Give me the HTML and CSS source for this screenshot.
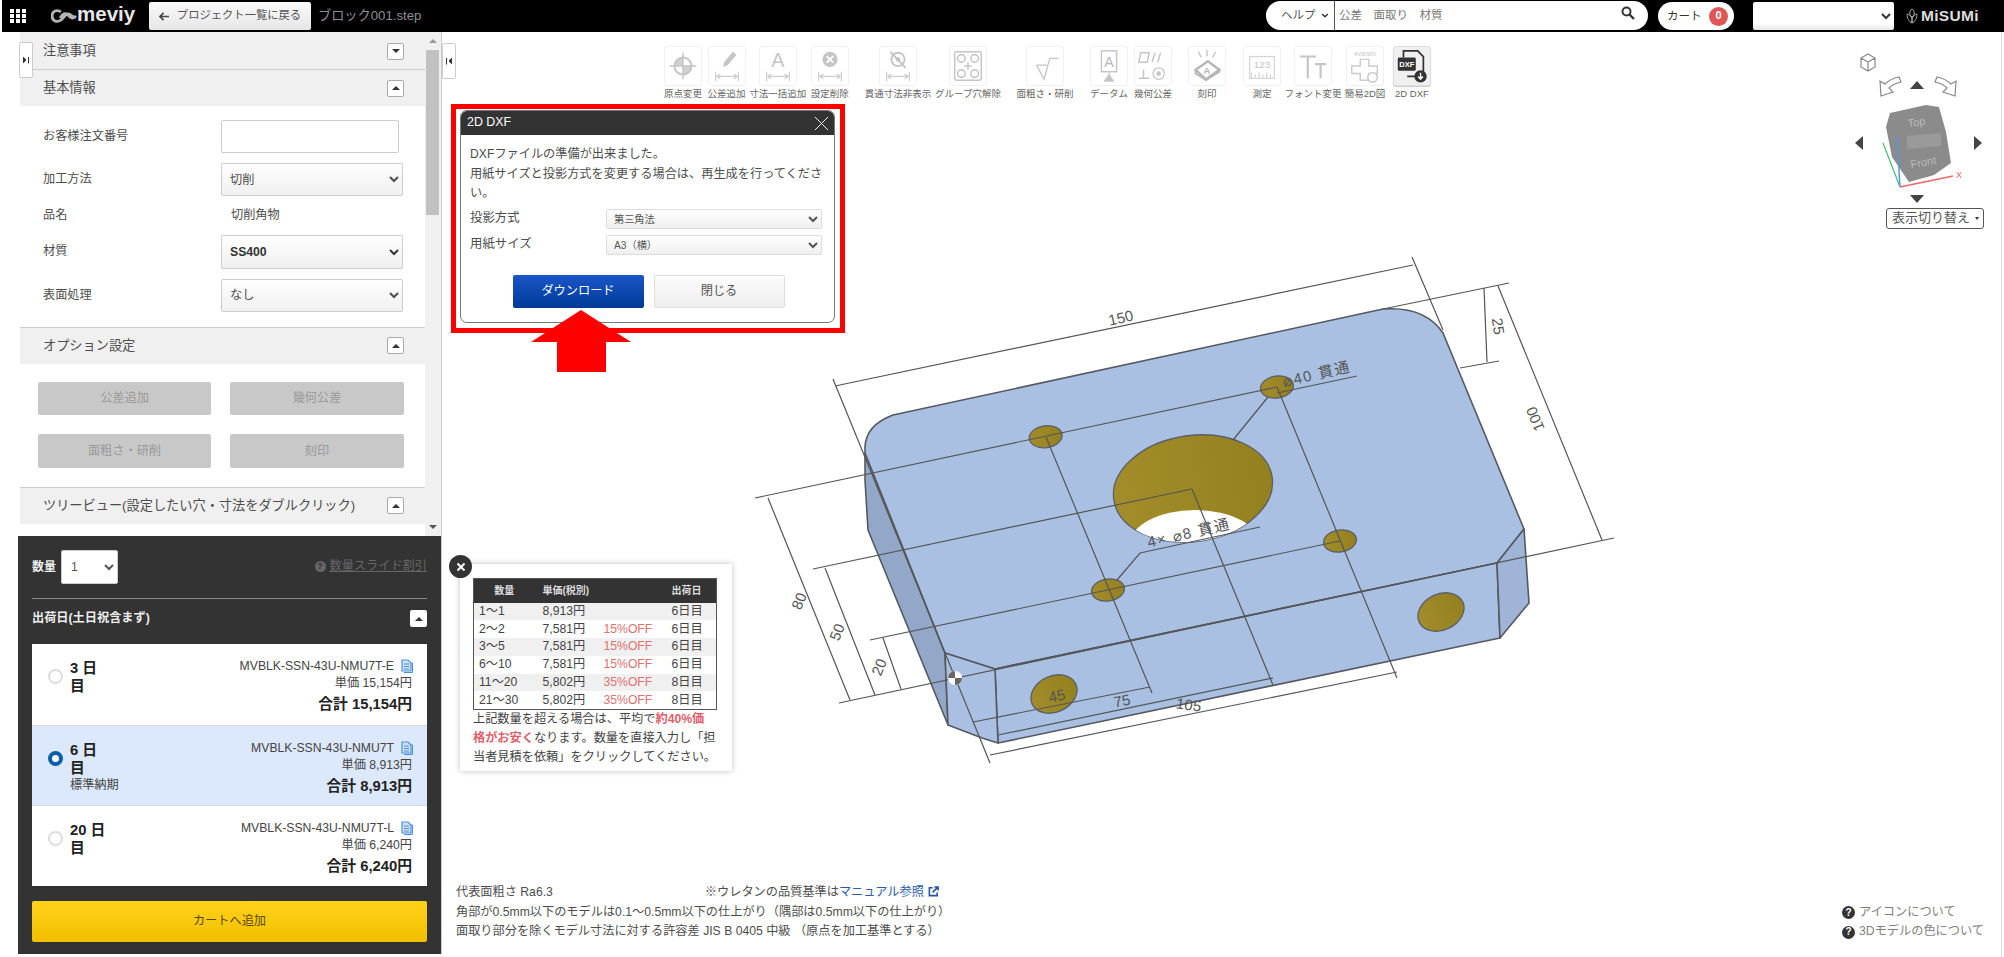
FILE: index.html
```html
<!DOCTYPE html>
<html lang="ja">
<head>
<meta charset="utf-8">
<title>meviy</title>
<link rel="stylesheet" href="styles.css">
</head>
<body>
<svg class="defs" width="0" height="0" aria-hidden="true">
  <defs>
    <symbol id="dim" viewBox="0 0 38 40">
      <path d="M7 26v10M31 26v10M8 31h22M8 31l4-2.5M8 31l4 2.5M30 31l-4-2.5M30 31l-4 2.5" fill="none" stroke="#c4c4c4" stroke-width="1.2"/>
    </symbol>
    <symbol id="copy" viewBox="0 0 12 14">
      <path d="M1 1h6l3 3v8H1z" fill="#cfe0f5" stroke="#4a90d9" stroke-width="1.2"/>
      <path d="M3 5h5M3 7.5h5M3 10h5" stroke="#4a90d9"/>
      <path d="M10 4h1.500v9.500H3" fill="none" stroke="#4a90d9"/>
    </symbol>
  </defs>
</svg>

<header class="topbar">
  <svg class="grid-icon" viewBox="0 0 16 14"><path d="M0 0h4v4H0zM6 0h4v4H6zM12 0h4v4h-4zM0 5h4v4H0zM6 5h4v4H6zM12 5h4v4h-4zM0 10h4v4H0zM6 10h4v4H6zM12 10h4v4h-4z" fill="#fff"/></svg>
  <div class="logo">
    <svg viewBox="0 0 26 14"><path d="M10 3C6 0 1 2 1 7s5 7 9 4c3-2 4-6 7-6s4 3 7 3M9 9c3-4 5-6 8-3 3 4 5 4 8 1" fill="none" stroke="#b4b4b4" stroke-width="2.800"/></svg>
    <span>meviy</span>
  </div>
  <button class="back-btn"><svg viewBox="0 0 12 10"><path d="M5 1L1 5l4 4M1 5h10" fill="none" stroke="#444" stroke-width="1.800"/></svg>プロジェクト一覧に戻る</button>
  <span class="filename">ブロック001.step</span>
  <div class="search">
    <span class="help">ヘルプ<svg viewBox="0 0 10 6"><path d="M1.500 1L5 4.500 8.500 1" fill="none" stroke="#333" stroke-width="1.800"/></svg></span>
    <input class="search-input" type="text" placeholder="公差　面取り　材質">
    <svg class="search-icon" viewBox="0 0 14 14"><circle cx="5.500" cy="5.500" r="4" fill="none" stroke="#333" stroke-width="2"/><path d="M8.500 8.500l4.500 4.500" stroke="#333" stroke-width="2.400"/></svg>
  </div>
  <div class="cart">カート<span class="cart-badge">0</span></div>
  <select class="top-select"><option></option></select>
  <div class="misumi">
    <svg viewBox="0 0 12 16"><path d="M6 1c3 2 3 6 0 8C3 7 3 3 6 1zM1 6c2 0 4 2 5 5v4C3 14 1 10 1 6zM11 6c-2 0-4 2-5 5v4c3-1 5-5 5-9z" fill="none" stroke="#aaa"/></svg>
    <span>MiSUMi</span>
  </div>
</header>

<div class="workspace">
  <aside class="sidebar">
    <button class="edge-tab edge-tab-left"><span class="bar-r"></span></button>
    <div class="settings">
      <div class="settings-scroll">
        <div class="acc-head first"><span>注意事項</span><button class="toggle"><i class="tri-down"></i></button></div>
        <div class="acc-head"><span>基本情報</span><button class="toggle"><i class="tri-up"></i></button></div>
        <div class="form-body">
          <label class="form-label">お客様注文番号</label><input class="form-input" type="text">
          <label class="form-label">加工方法</label><select class="form-select"><option>切削</option></select>
          <label class="form-label">品名</label><span class="form-text">切削角物</span>
          <label class="form-label">材質</label><select class="form-select form-select-strong"><option>SS400</option></select>
          <label class="form-label">表面処理</label><select class="form-select"><option>なし</option></select>
        </div>
        <div class="acc-head"><span>オプション設定</span><button class="toggle"><i class="tri-up"></i></button></div>
        <div class="option-body">
          <button class="opt-btn">公差追加</button><button class="opt-btn">幾何公差</button>
          <button class="opt-btn">面粗さ・研削</button><button class="opt-btn">刻印</button>
        </div>
        <div class="acc-head"><span>ツリービュー(設定したい穴・寸法をダブルクリック)</span><button class="toggle"><i class="tri-up"></i></button></div>
      </div>
      <div class="scrollbar">
        <i class="sb-up"></i><div class="sb-thumb"></div><i class="sb-down"></i>
      </div>
    </div>

    <section class="order">
      <div class="qty-row">
        <span class="qty-label">数量</span>
        <select class="qty-select"><option>1</option></select>
        <a class="qty-link"><i class="q-mark q-gray">?</i><u>数量スライド割引</u></a>
      </div>
      <div class="ship-head"><span>出荷日(土日祝含まず)</span><button class="toggle toggle-plain"><i class="tri-up"></i></button></div>
      <div class="ship-list">
        <label class="ship-row">
          <input class="radio" type="radio" name="ship">
          <span class="ship-date"><b>3 日目</b></span>
          <span class="ship-price">
            <span class="part">MVBLK-SSN-43U-NMU7T-E<svg class="copy"><use href="#copy"/></svg></span>
            <span class="unit">単価 15,154円</span>
            <strong class="total">合計 15,154円</strong>
          </span>
        </label>
        <label class="ship-row selected">
          <input class="radio" type="radio" name="ship" checked>
          <span class="ship-date"><b>6 日目</b><small>標準納期</small></span>
          <span class="ship-price">
            <span class="part">MVBLK-SSN-43U-NMU7T<svg class="copy"><use href="#copy"/></svg></span>
            <span class="unit">単価 8,913円</span>
            <strong class="total">合計 8,913円</strong>
          </span>
        </label>
        <label class="ship-row">
          <input class="radio" type="radio" name="ship">
          <span class="ship-date"><b>20 日目</b></span>
          <span class="ship-price">
            <span class="part">MVBLK-SSN-43U-NMU7T-L<svg class="copy"><use href="#copy"/></svg></span>
            <span class="unit">単価 6,240円</span>
            <strong class="total">合計 6,240円</strong>
          </span>
        </label>
      </div>
      <button class="cart-btn">カートへ追加</button>
    </section>
  </aside>

  <main class="viewer">
    <!-- 3D model canvas: coordinates are those of the page -->
    <svg class="model" viewBox="442 32 1562 925">
      <defs>
        <clipPath id="bigHole"><ellipse cx="1193" cy="488.500" rx="80" ry="53" transform="rotate(-8 1193 488.500)"/></clipPath>
        <linearGradient id="gold" x1="0" x2="1" y1="0" y2="0"><stop offset="0" stop-color="#a38d2a"/><stop offset="1" stop-color="#93801f"/></linearGradient>
      </defs>
      <g stroke="#55595f" stroke-width="1.600" stroke-linejoin="round">
        <path d="M865 453L945 653 948 725 868 530 865 480Z" fill="#93a8c9"/>
        <path d="M865 453V447Q866 425 893 415L1383 309Q1425 306 1443 333L1524 529 1497 563 995 669 945 653Z" fill="#a9c0e2"/>
        <path d="M995 669L1497 563 1500 638 998 743Z" fill="#a9c0e2"/>
        <path d="M1497 563L1524 529 1529 603 1500 638Z" fill="#9fb4d6"/>
        <path d="M945 653L995 669 998 743 982 738 948 725Z" fill="#a9c0e2"/>
      </g>
      <g stroke="#5a5f68" stroke-width="1.300" fill="url(#gold)">
        <ellipse cx="1193" cy="488.500" rx="80" ry="53" transform="rotate(-8 1193 488.500)"/>
        <ellipse cx="1045.700" cy="436.700" rx="16.500" ry="11" transform="rotate(-8 1045.700 436.700)"/>
        <ellipse cx="1108" cy="590" rx="16.500" ry="11" transform="rotate(-8 1108 590)"/>
        <ellipse cx="1277" cy="387" rx="16.500" ry="11" transform="rotate(-8 1277 387)"/>
        <ellipse cx="1340" cy="541" rx="16.500" ry="11" transform="rotate(-8 1340 541)"/>
        <ellipse cx="1054" cy="694" rx="24" ry="18" transform="rotate(-25 1054 694)"/>
        <ellipse cx="1441" cy="612" rx="24" ry="18" transform="rotate(-25 1441 612)"/>
      </g>
      <ellipse class="hole-through" cx="1195" cy="546" rx="66" ry="36" clip-path="url(#bigHole)"/>
      <g fill="none" stroke="#555" stroke-width="1.200">
        <path d="M755 498L1277 387M813 569L1192 489M870 640L1340 541M839 703L1614 538"/>
        <path d="M1046 437L1152 693M1192 489L1273 685M1277 387L1397 678"/>
        <path d="M835 386L1413 265M1412 257L1443 330M833 379L990 763M1383 309L1509 283"/>
        <path d="M1498 286L1602 540M1484 288L1487 362M1460 368L1499 361"/>
        <path d="M768 498L850 700M825 568L875 695M883 638L901 689"/>
        <path d="M973 722L1150 687M998 735L1273 678M990 755L1397 672"/>
        <path d="M1117 580L1140 553 1260 527M1233 440L1268 397M1277 393L1357 376"/>
      </g>
      <g class="dim-text">
        <text transform="translate(1122 323) rotate(-13)">150</text>
        <text transform="translate(1540 417) rotate(-112)">100</text>
        <text transform="translate(1493 327) rotate(82)">25</text>
        <text transform="translate(804 603) rotate(-68)">80</text>
        <text transform="translate(842 634) rotate(-68)">50</text>
        <text transform="translate(884 669) rotate(-68)">20</text>
        <text transform="translate(1058 701) rotate(-12)">45</text>
        <text transform="translate(1123 706) rotate(-11)">75</text>
        <text transform="translate(1188 710) rotate(8)">105</text>
        <text class="dim-wide" transform="translate(1190 538) rotate(-13)">4× ⌀8 貫通</text>
        <text class="dim-wide" transform="translate(1318 379) rotate(-13)">⌀40 貫通</text>
      </g>
      <g class="origin">
        <circle cx="955" cy="678" r="7" fill="#fff"/>
        <path d="M955 678V671A7 7 0 0 0 948 678ZM955 678V685A7 7 0 0 0 962 678Z" fill="#666"/>
      </g>

      <!-- view navigator -->
      <g fill="none" stroke="#888" stroke-width="1.200">
        <path d="M1868 54l7 4v9l-7 4-7-4v-9zM1861 58l7 4 7-4M1868 62v9"/>
        <path d="M1881 96l-1-15 5 3c4-4 9-6 14-7l2 5c-5 1-9 3-12 6l4 4z"/>
        <path d="M1955 96l1-15-5 3c-4-4-9-6-14-7l-2 5c5 1 9 3 12 6l-4 4z"/>
      </g>
      <g fill="#444">
        <path d="M1917 81l7 8h-14zM1917 203l-7-8h14zM1863 136v14l-8-7zM1974 136v14l8-7z"/>
      </g>
      <path d="M1926 105L1939 107 1946 132 1951 163 1934 175 1909 182 1892 157 1886 127 1890 113Z" fill="#8b8b8b"/>
      <path d="M1907 136L1941 133 1941 146 1907 149Z" fill="#9a9a9a"/>
      <text class="cube-text" transform="translate(1917 126) rotate(-8)">Top</text>
      <text class="cube-text" transform="translate(1924 166) rotate(-10)">Front</text>
      <path d="M1900 187L1953 176" stroke="#e66" stroke-width="1.500"/>
      <path d="M1900 187L1883 143" stroke="#4b7" stroke-width="1.200"/>
      <path d="M1900 187L1897 137" stroke="#59d" stroke-width="1.500"/>
      <text class="axis-x" x="1956" y="178">X</text>
    </svg>

    <div class="toolbar">
      <div class="tool"><div class="tool-box"><svg viewBox="0 0 38 40"><circle cx="19" cy="20" r="9" fill="#c9c9c9"/><path d="M19 20V11A9 9 0 0 1 28 20ZM19 20V29A9 9 0 0 1 10 20Z" fill="#fff"/><circle cx="19" cy="20" r="9" fill="none" stroke="#bbb" stroke-width="2"/><path d="M19 6v28M5 20h28" stroke="#bbb" stroke-width="1.500"/></svg></div><span>原点変更</span></div>
      <div class="tool"><div class="tool-box"><svg viewBox="0 0 38 40"><use href="#dim"/><path d="M15 21l1-5 9-11 4 3-9 11z" fill="#bbb"/></svg></div><span>公差追加</span></div>
      <div class="tool"><div class="tool-box"><svg viewBox="0 0 38 40"><use href="#dim"/><text class="tool-a" x="19" y="21">A</text></svg></div><span>寸法一括追加</span></div>
      <div class="tool"><div class="tool-box"><svg viewBox="0 0 38 40"><use href="#dim"/><circle cx="19" cy="13" r="8" fill="#bbb"/><path d="M15.500 9.500l7 7M22.500 9.500l-7 7" stroke="#fff" stroke-width="2"/></svg></div><span>設定削除</span></div>
      <div class="tool"><div class="tool-box"><svg viewBox="0 0 38 40"><use href="#dim"/><circle cx="19" cy="13" r="7" fill="none" stroke="#bbb" stroke-width="2"/><circle cx="19" cy="13" r="2.500" fill="#bbb"/><path d="M11 5l16 17" stroke="#bbb" stroke-width="2"/></svg></div><span>貫通寸法非表示</span></div>
      <div class="tool"><div class="tool-box"><svg viewBox="0 0 38 40"><rect x="5" y="5" width="28" height="30" rx="2" fill="none" stroke="#bbb" stroke-width="1.500"/><g fill="none" stroke="#aaa" stroke-width="1.300"><circle cx="12" cy="12" r="4"/><circle cx="26" cy="12" r="4"/><circle cx="12" cy="28" r="4"/><circle cx="26" cy="28" r="4"/></g><path d="M19 16v8M15 20h8" stroke="#bbb" stroke-width="1.500"/></svg></div><span>グループ穴解除</span></div>
      <div class="tool"><div class="tool-box"><svg viewBox="0 0 38 40"><path d="M10 19l8 15 6-22h9M10 19h11" fill="none" stroke="#bbb" stroke-width="1.400"/></svg></div><span>面粗さ・研削</span></div>
      <div class="tool"><div class="tool-box"><svg viewBox="0 0 38 40"><rect x="11" y="4" width="16" height="22" fill="none" stroke="#bbb" stroke-width="1.500"/><text class="tool-a tool-a-sm" x="19" y="21">A</text><path d="M19 26v5M14 36l5-7 5 7z" fill="#bbb" stroke="#bbb"/></svg></div><span>データム</span></div>
      <div class="tool"><div class="tool-box"><svg viewBox="0 0 38 40"><path d="M6 6h9l-2 10H4zM21 6l-3 10M27 6l-3 10M9 24v9M4 33h11" fill="none" stroke="#bbb" stroke-width="1.500"/><circle cx="25" cy="28" r="6" fill="none" stroke="#bbb" stroke-width="1.300"/><circle cx="25" cy="28" r="2.500" fill="#bbb"/></svg></div><span>幾何公差</span></div>
      <div class="tool"><div class="tool-box"><svg viewBox="0 0 38 40"><path d="M19 3v7M10 5l3 6M28 5l-3 6" stroke="#bbb" stroke-width="1.500"/><path d="M7 24l13-9 12 9-14 10z" fill="#fff" stroke="#aaa" stroke-width="2.500"/><path d="M7 24v4l11 7 14-9v-3" fill="none" stroke="#aaa" stroke-width="2"/><text class="tool-a tool-a-xs" x="19" y="28">A</text></svg></div><span>刻印</span></div>
      <div class="tool"><div class="tool-box"><svg viewBox="0 0 38 40"><rect x="6" y="10" width="26" height="23" fill="none" stroke="#ccc" stroke-width="1.300"/><text class="tool-num" x="19" y="22">123</text><path d="M8 32v-5M12 32v-3M16 32v-5M20 32v-3M24 32v-5M28 32v-3" stroke="#bbb"/></svg></div><span>測定</span></div>
      <div class="tool"><div class="tool-box"><svg viewBox="0 0 38 40"><path d="M5 10h17M13.500 10v23M21 18h12M27 18v15" fill="none" stroke="#bbb" stroke-width="2.300"/></svg></div><span>フォント変更</span></div>
      <div class="tool"><div class="tool-box"><svg viewBox="0 0 38 40"><text class="tool-views" x="19" y="9">6VIEWS</text><path d="M14 13h9v7h9v8H23v7h-9v-7H5v-8h9z" fill="none" stroke="#c4c4c4" stroke-width="1.500"/><circle cx="27" cy="32" r="5" fill="#fff" stroke="#bbb" stroke-width="1.500"/></svg></div><span>簡易2D図</span></div>
      <div class="tool tool-active"><div class="tool-box"><svg viewBox="0 0 38 40"><path d="M10 11V4h15l6 6v21H14" fill="none" stroke="#333" stroke-width="1.800"/><rect x="4" y="11" width="19" height="14" rx="1.500" fill="#333"/><text class="tool-dxf" x="13.500" y="21.500">DXF</text><circle cx="28" cy="31" r="6.500" fill="#333"/><path d="M28 27v6M25.500 31l2.500 3 2.500-3" fill="none" stroke="#fff" stroke-width="1.500"/></svg></div><span>2D DXF</span></div>
    </div>

    <div class="footnotes">
      <div class="notes">
        <p>代表面粗さ Ra6.3<span class="note-ref">※ウレタンの品質基準は<a class="manual">マニュアル参照</a><svg class="ext" viewBox="0 0 12 12"><path d="M10 7v3.500H1.500V2H5M7 1h4v4M11 1L5 7" fill="none" stroke="#2350a0" stroke-width="1.700"/></svg></span></p>
        <p>角部が0.5mm以下のモデルは0.1～0.5mm以下の仕上がり（隅部は0.5mm以下の仕上がり）</p>
        <p>面取り部分を除くモデル寸法に対する許容差 JIS B 0405 中級 （原点を加工基準とする）</p>
      </div>
      <div class="notes-help">
        <p><i class="q-mark">?</i>アイコンについて</p>
        <p><i class="q-mark">?</i>3Dモデルの色について</p>
      </div>
    </div>

    <button class="edge-tab edge-tab-right"><span class="bar-l"></span></button>
    <button class="view-switch">表示切り替え<i class="tri-down tri-small"></i></button>

    <!-- annotation frame with the dialog -->
    <div class="callout">
      <div class="dialog">
        <div class="dialog-title"><span>2D DXF</span><svg viewBox="0 0 16 16"><path d="M1 1l14 14M15 1L1 15" stroke="#fff" stroke-width="1"/></svg></div>
        <div class="dialog-body">
          <p class="dialog-text">DXFファイルの準備が出来ました。<br>用紙サイズと投影方式を変更する場合は、再生成を行ってください。</p>
          <div class="dialog-field"><label>投影方式</label><select><option>第三角法</option></select></div>
          <div class="dialog-field"><label>用紙サイズ</label><select><option>A3（横）</option></select></div>
          <div class="dialog-actions">
            <button class="btn-primary">ダウンロード</button>
            <button class="btn-secondary">閉じる</button>
          </div>
        </div>
      </div>
    </div>
    <svg class="red-arrow" viewBox="0 0 100 62"><path d="M50 0L100 32H75V62H26V32H0Z" fill="#f00"/></svg>

    <!-- floating price popup -->
    <div class="price-pop">
      <button class="pop-close"><svg viewBox="0 0 10 10"><path d="M1.500 1.500l7 7M8.500 1.500l-7 7" stroke="#fff" stroke-width="2"/></svg></button>
      <table class="price-table">
        <thead><tr><th>数量</th><th>単価(税別)</th><th></th><th>出荷日</th></tr></thead>
        <tbody>
          <tr><td>1～1</td><td>8,913円</td><td></td><td>6日目</td></tr>
          <tr><td>2～2</td><td>7,581円</td><td class="off">15%OFF</td><td>6日目</td></tr>
          <tr><td>3～5</td><td>7,581円</td><td class="off">15%OFF</td><td>6日目</td></tr>
          <tr><td>6～10</td><td>7,581円</td><td class="off">15%OFF</td><td>6日目</td></tr>
          <tr><td>11～20</td><td>5,802円</td><td class="off">35%OFF</td><td>8日目</td></tr>
          <tr><td>21～30</td><td>5,802円</td><td class="off">35%OFF</td><td>8日目</td></tr>
        </tbody>
      </table>
      <p class="pop-text">上記数量を超える場合は、平均で<b>約40%価<br>格がお安く</b>なります。数量を直接入力し「担<br>当者見積を依頼」をクリックしてください。</p>
    </div>
  </main>
</div>
</body>
</html>
```

FILE: styles.css
```css
* { box-sizing: border-box; }
html, body { height: 100%; }
body {
  margin: 0;
  height: 957px;
  overflow: hidden;
  background: #fff;
  color: #4d4d4d;
  font: 12.2px/1.4 "Liberation Sans", "Noto Sans CJK JP", sans-serif;
  display: flex;
  flex-direction: column;
}
button, select, input { font: inherit; color: inherit; }
p { margin: 0; }
.defs { position: absolute; }

/* top bar */
.topbar {
  flex: none;
  height: 32px;
  margin-left: 2px;
  background: #000;
  display: flex;
  align-items: center;
  color: #333;
}
.grid-icon { width: 16px; height: 14px; margin-left: 8px; }
.logo { display: flex; align-items: center; margin-left: 25px; width: 98px; color: #e6e6e6; }
.logo svg { width: 26px; height: 14px; }
.logo span { font-size: 20.5px; font-weight: 700; line-height: 1; margin-top: -3px; }
.back-btn {
  width: 162px; height: 28px;
  background: linear-gradient(#fafafa, #e6e6e6);
  border: 0; border-radius: 2px;
  color: #555;
  font-size: 11.3px;
  display: flex; align-items: center; justify-content: center; gap: 7px;
  padding: 0;
}
.back-btn svg { width: 11px; height: 9px; }
.filename { margin-left: 7px; color: #8e8e8e; font-size: 13.2px; }
.search {
  margin-left: auto;
  width: 382px; height: 29px;
  background: #fff;
  border-radius: 15px;
  display: flex; align-items: center;
  margin-top: -2px;
}
.help {
  width: 69px; height: 100%;
  padding-left: 15px;
  border-right: 1px solid #555;
  display: flex; align-items: center; gap: 5px;
  font-size: 11.5px; color: #555;
}
.help svg { width: 8px; height: 5px; }
.search-input {
  flex: 1; min-width: 0; height: 100%;
  border: 0; outline: 0; background: transparent;
  padding: 0 0 0 4px;
  font-size: 11.5px;
}
.search-input::placeholder { color: #777; }
.search-icon { width: 14px; height: 14px; margin: 0 13px 4px 0; flex: none; }
.cart {
  margin-left: 10px;
  width: 76px; height: 28px;
  background: #fff;
  border-radius: 14px;
  display: flex; align-items: center; justify-content: space-between;
  padding: 0 6px 0 9px;
  font-size: 11.5px;
}
.cart-badge {
  width: 19px; height: 19px;
  border-radius: 50%;
  background: #e05555;
  color: #fff;
  font-size: 11px; font-weight: 700;
  display: flex; align-items: center; justify-content: center;
}
.top-select {
  margin-left: 19px;
  width: 141px; height: 28px;
  border: 0; border-radius: 2px;
  background: linear-gradient(#fff 75%, #e8e8e8);
}
.misumi { margin: 0 24px 0 12px; width: 74px; display: flex; align-items: center; gap: 3px; color: #ddd; }
.misumi svg { width: 12px; height: 16px; flex: none; }
.misumi span { font-size: 15.5px; font-weight: 700; letter-spacing: .3px; }

/* layout */
.workspace { flex: 1; min-height: 0; display: flex; }
.sidebar {
  position: relative;
  flex: none;
  width: 424px;
  margin: 0 0 3px 18px;
  border-right: 1px solid #ccc;
  display: flex; flex-direction: column;
}
.settings { flex: 1; min-height: 0; display: flex; padding-left: 2px; border-bottom: 0; }
.settings-scroll { flex: 1; min-width: 0; overflow: hidden; }
.scrollbar {
  flex: none; width: 16px;
  background: #f1f1f1;
  position: relative;
  padding: 18px 2px 0 1px;
}
.sb-thumb { height: 165px; background: #c1c1c1; }
.sb-up, .sb-down {
  position: absolute; left: 4px;
  border-left: 4px solid transparent; border-right: 4px solid transparent;
}
.sb-up { top: 7px; border-bottom: 4px solid #999; }
.sb-down { bottom: 7px; border-top: 4px solid #555; }

/* accordions */
.acc-head {
  height: 37px;
  border-top: 1px solid #ccc;
  background: #f0f0f0;
  padding: 0 21px 0 23px;
  display: flex; align-items: center; justify-content: space-between;
  font-size: 13.2px;
  color: #4d4d4d;
}
.acc-head.first { border-top: 0; padding-top: 1px; }
.toggle {
  width: 17px; height: 17px; padding: 0;
  border: 1px solid #aaa; border-radius: 2px;
  background: #fff;
  display: flex; align-items: center; justify-content: center;
}
.tri-up, .tri-down { display: block; border-left: 4px solid transparent; border-right: 4px solid transparent; }
.tri-up { border-bottom: 4px solid #333; }
.tri-down { border-top: 4px solid #333; }
.form-body {
  padding: 14px 22px 15px 23px;
  display: grid;
  grid-template-columns: 178px 182px;
  row-gap: 10px;
  align-items: center;
}
.form-input { width: 178px; height: 33px; border: 1px solid #ccc; border-radius: 2px; background: #fff; }
.form-text { padding-left: 10px; height: 19px; line-height: 19px; }
.form-select {
  height: 33.330px; padding: 0 4px;
  border: 1px solid #ccc; border-radius: 2px;
  background: linear-gradient(#fff, #f0f0f0);
  color: #4d4d4d;
}
.form-select-strong { color: #333; font-weight: 700; }
.option-body {
  padding: 18px 21px 19px 18px;
  display: grid;
  grid-template-columns: 173px 174px;
  grid-auto-rows: 33.5px;
  column-gap: 19px; row-gap: 19px;
}
.opt-btn { border: 0; border-radius: 2px; background: #c8c8c8; color: #999; padding: 0; }

/* edge tabs */
.edge-tab {
  position: absolute; z-index: 3;
  width: 14px; height: 36px; padding: 0;
  background: #fff;
  border: 1px solid #ccc; border-radius: 2px;
  display: flex; align-items: center; justify-content: center;
}
.edge-tab-left { left: 1px; top: 10px; }
.edge-tab-right { left: 0; top: 11px; }
.bar-r, .bar-l { display: block; width: 6px; height: 7px; }
.bar-r { background: linear-gradient(90deg, #333 0 3px, transparent 3px 5px, #333 5px); clip-path: polygon(0 0, 60% 50%, 0 100%, 0 0, 75% 0, 100% 0, 100% 100%, 75% 100%, 75% 0); }
.bar-l { background: linear-gradient(270deg, #333 0 3px, transparent 3px 5px, #333 5px); clip-path: polygon(100% 0, 40% 50%, 100% 100%, 100% 0, 25% 0, 0 0, 0 100%, 25% 100%, 25% 0); }

/* order panel */
.order {
  flex: none;
  height: 418px;
  background: #333;
  padding: 14px 14px 12px;
  color: #fff;
}
.qty-row { height: 34px; display: flex; align-items: center; }
.qty-label { width: 29px; font-weight: 700; font-size: 12px; color: #eee; }
.qty-select {
  width: 57px; height: 34px;
  border: 1px solid #ccc; border-radius: 2px;
  background: #fff; color: #555;
  padding: 0 5px;
}
.qty-link { margin-left: auto; display: flex; align-items: center; gap: 4px; color: #666; }
.q-mark {
  flex: none;
  display: inline-flex; align-items: center; justify-content: center;
  width: 13px; height: 13px;
  border-radius: 50%;
  background: #333; color: #fff;
  font-style: normal; font-weight: 700; font-size: 10px; line-height: 1;
}
.q-mark.q-gray { background: #666; color: #333; width: 11px; height: 11px; font-size: 9px; }
.ship-head {
  margin-top: 14px; height: 46px; padding-top: 11px;
  border-top: 1px solid #888;
  display: flex; align-items: flex-start; justify-content: space-between;
  font-weight: 700; font-size: 12.2px; color: #eee;
}
.toggle-plain { border: 0; }
.ship-list { background: #fff; }
.ship-row {
  height: 80.67px;
  display: flex;
  color: #444;
  border-top: 1px solid #d8d8d8;
  padding: 13px 15px 0 16px;
}
.ship-row:first-child { border-top: 0; }
.ship-row.selected { background: #dce8fb; }
.radio {
  appearance: none;
  flex: none;
  width: 15px; height: 15px;
  margin: 12px 7px 0 0;
  border: 2px solid #ddd;
  border-radius: 50%;
  background: #fff;
}
.radio:checked { border: 4px solid #0a5ea8; }
.ship-date { width: 40px; flex: none; display: block; margin-top: 2px; }
.ship-date b { display: block; font-size: 14.8px; line-height: 18px; color: #222; }
.ship-date small { display: block; font-size: 12.2px; line-height: 16px; white-space: nowrap; }
.ship-price { flex: 1; display: flex; flex-direction: column; align-items: flex-end; }
.part { display: flex; align-items: center; line-height: 18px; }
.copy { width: 12px; height: 14px; margin-left: 7px; margin-right: -1px; }
.unit { line-height: 17px; }
.total { font-size: 14.8px; line-height: 25px; color: #222; }
.cart-btn {
  display: block; width: 100%; height: 41px; margin-top: 15px;
  border: 0; border-radius: 2px;
  background: linear-gradient(#ffd21a, #f2bf00);
  color: #5a4800;
  padding: 0;
}

/* viewer */
.viewer {
  position: relative;
  flex: 1; min-width: 0;
  margin: 0 2px 0 0;
  border-right: 1px solid #ddd;
  display: flex; flex-direction: column;
}
.model { position: absolute; left: 0; top: 0; width: 1562px; height: 925px; }
.hole-through { fill: #fff; }
.dim-text text { font-size: 15px; fill: #555; text-anchor: middle; font-family: "Liberation Sans", "Noto Sans CJK JP", sans-serif; }
.dim-text .dim-wide { letter-spacing: 1.5px; }
.cube-text { font-size: 11px; fill: #bbb; text-anchor: middle; }
.axis-x { font-size: 9px; fill: #e66; }
.toolbar { position: relative; flex: none; display: flex; padding: 14px 0 0 222px; }
.tool { width: 38px; flex: none; position: relative; }
.tool:nth-child(2) { margin-left: 5.6px; }
.tool:nth-child(3) { margin-left: 13.1px; }
.tool:nth-child(4) { margin-left: 14px; }
.tool:nth-child(5) { margin-left: 30.3px; }
.tool:nth-child(6) { margin-left: 32px; }
.tool:nth-child(7) { margin-left: 39px; }
.tool:nth-child(8) { margin-left: 26px; }
.tool:nth-child(9) { margin-left: 6px; }
.tool:nth-child(10) { margin-left: 16px; }
.tool:nth-child(11) { margin-left: 17px; }
.tool:nth-child(12) { margin-left: 13px; }
.tool:nth-child(13) { margin-left: 14px; }
.tool:nth-child(14) { margin-left: 9px; }
.tool-box {
  width: 38px; height: 40px;
  border: 1px solid #f0f0f0; border-radius: 3px;
  background: #fff;
}
.tool-box svg { display: block; width: 100%; height: 100%; opacity: .85; }
.tool span {
  display: block;
  margin: 1px -20px 0;
  text-align: center;
  white-space: nowrap;
  font-size: 9.5px; line-height: 13px;
  color: #666;
}
.tool-active .tool-box { background: #f0f0f0; border-color: #ddd; box-shadow: 0 1px 1px #ccc; }
.tool-active .tool-box svg { opacity: 1; }
.tool-a { font-size: 21px; fill: #bbb; text-anchor: middle; }
.tool-a-sm { font-size: 15px; fill: #aaa; }
.tool-a-xs { font-size: 10px; fill: #aaa; font-weight: 700; }
.tool-num { font-size: 10.5px; fill: #bbb; text-anchor: middle; }
.tool-views { font-size: 6px; font-weight: 700; fill: #ccc; text-anchor: middle; }
.tool-dxf { font-size: 8px; font-weight: 700; fill: #fff; text-anchor: middle; }

.footnotes {
  position: relative;
  margin-top: auto; margin-bottom: 15px;
  padding: 0 17px 0 14px;
  display: flex; align-items: flex-end; justify-content: space-between;
  line-height: 19.6px;
  color: #4d4d4d;
}
.note-ref { margin-left: 152px; }
.manual { color: #2a5caa; }
.ext { width: 11px; height: 11px; margin-left: 4px; vertical-align: -1px; }
.notes-help { color: #808080; }
.notes-help p { display: flex; align-items: center; gap: 4px; }

.view-switch {
  position: absolute; left: 1444px; top: 176px;
  width: 98px; height: 21px; padding: 0 0 0 5px;
  background: #fff;
  border: 1px solid #555; border-radius: 3px;
  font-size: 13px; color: #555;
  display: flex; align-items: center; gap: 5px;
  white-space: nowrap;
}
.tri-small { border-left-width: 2.500px; border-right-width: 2.500px; border-top-width: 3px; }

/* dialog */
.callout {
  position: absolute; left: 9px; top: 72px;
  width: 394px; height: 229px;
  border: 5px solid #f00;
  background: #fff;
  padding: 1px 0 0 4px;
}
.dialog {
  width: 375px; height: 213px;
  border: 1px solid #777; border-radius: 7px;
  overflow: hidden;
  background: #fff;
  color: #4d4d4d;
}
.dialog-title {
  height: 24px;
  background: #333;
  color: #fff;
  padding: 0 5px 0 6px;
  display: flex; align-items: center; justify-content: space-between;
  font-size: 12.4px;
}
.dialog-title svg { width: 15px; height: 15px; }
.dialog-body { padding: 10px 12px 0 9px; }
.dialog-text { line-height: 19.6px; height: 59px; margin-right: -8px; }
.dialog-field { display: flex; align-items: center; height: 20px; margin-top: 6px; font-size: 12.4px; }
.dialog-field:first-of-type { margin-top: 5px; }
.dialog-field label { width: 136px; }
.dialog-field select {
  width: 216px; height: 20px;
  padding: 0 3px;
  border: 1px solid #ddd; border-radius: 2px;
  background: linear-gradient(#fff, #f0f0f0);
  font-size: 10.2px; color: #555;
}
.dialog-actions { display: flex; justify-content: center; gap: 10px; margin: 20px 0 0 5px; }
.dialog-actions button { width: 131px; height: 33px; border-radius: 2px; padding: 0; font-size: 12.2px; }
.btn-primary { border: 0; background: linear-gradient(#1a56c8, #003a96); color: #fff; }
.btn-secondary { border: 1px solid #ddd; background: linear-gradient(#fdfdfd, #eee); color: #555; }
.red-arrow { position: absolute; left: 89px; top: 278px; width: 100px; height: 62px; }

/* price popup */
.price-pop {
  position: absolute; left: 18px; top: 532px;
  width: 272px; height: 207px;
  padding: 14px 12px 0 13px;
  background: #fff;
  box-shadow: 0 0 6px rgba(0,0,0,.25);
}
.pop-close {
  position: absolute; left: -11px; top: -9px;
  width: 23px; height: 23px; padding: 6.5px;
  border: 0; border-radius: 50%;
  background: #333;
}
.pop-close svg { display: block; width: 100%; height: 100%; }
.price-table {
  width: 244px; height: 131px;
  table-layout: fixed;
  border-collapse: collapse;
  border: 1px solid #555;
  color: #444;
  line-height: 17px;
}
.price-table th:nth-child(1) { width: 69px; text-align: center; padding-right: 8px; }
.price-table th:nth-child(2) { width: 61px; }
.price-table th:nth-child(3) { width: 68px; }
.price-table th { height: 24px; background: #333; color: #ddd; font-size: 10px; text-align: left; padding: 0; white-space: nowrap; }
.price-table td { padding: 0; height: 17.8px; white-space: nowrap; }
.price-table td:first-child { padding-left: 5px; }
.price-table tbody tr:nth-child(odd) { background: #f0f0f0; }
.off { color: #e0706f; }
.pop-text { margin-top: 0; line-height: 19px; color: #444; white-space: nowrap; }
.pop-text b { color: #e0606a; }
```
